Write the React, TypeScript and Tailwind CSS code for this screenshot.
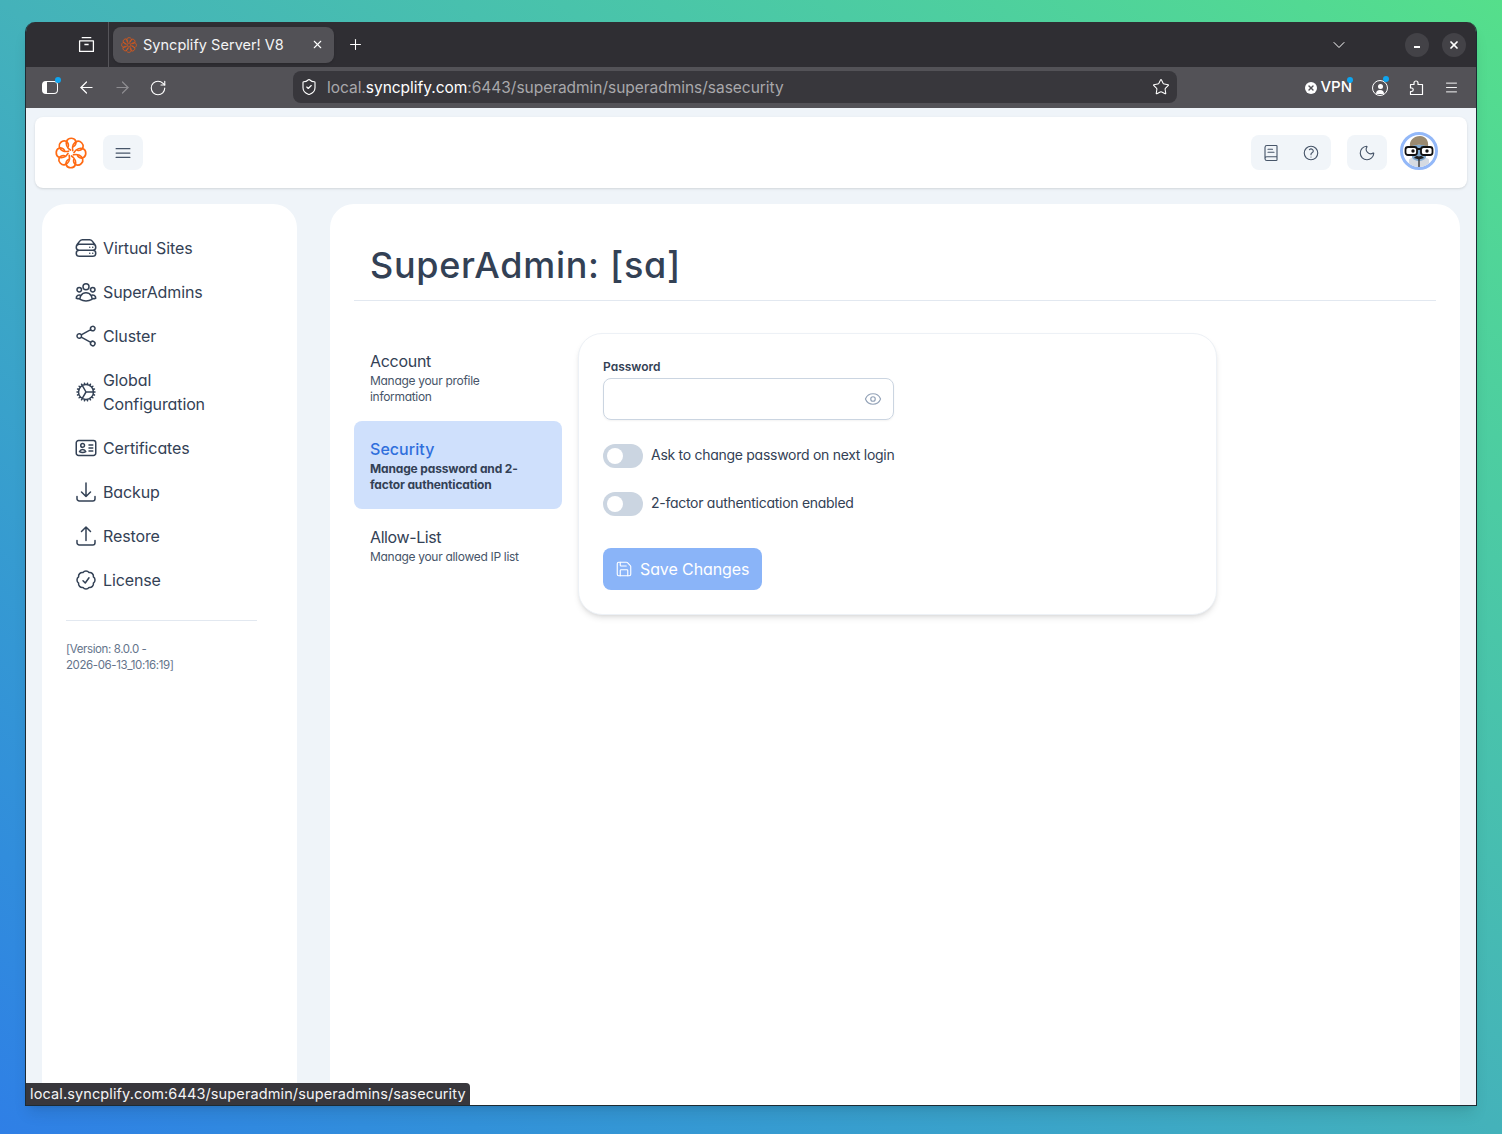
import { ArrowLeft, ArrowRight, BookText, ChevronDown, Eye, Menu, Moon, Plus, RotateCw, Save, ShieldCheck, Star, X } from "lucide-react";
import {
  HiOutlineArrowDownTray,
  HiOutlineArrowUpTray,
  HiOutlineBars3,
  HiOutlineCheckBadge,
  HiOutlineCog,
  HiOutlineIdentification,
  HiOutlineQuestionMarkCircle,
  HiOutlineServerStack,
  HiOutlineShare,
  HiOutlineUserGroup,
} from "react-icons/hi2";

const navItems = [
  { label: "Virtual Sites", icon: HiOutlineServerStack },
  { label: "SuperAdmins", icon: HiOutlineUserGroup },
  { label: "Cluster", icon: HiOutlineShare },
  { label: "Global Configuration", icon: HiOutlineCog },
  { label: "Certificates", icon: HiOutlineIdentification },
  { label: "Backup", icon: HiOutlineArrowDownTray },
  { label: "Restore", icon: HiOutlineArrowUpTray },
  { label: "License", icon: HiOutlineCheckBadge },
];

function Flower({ className, stroke }: { className: string; stroke: string }) {
  return (
    <svg viewBox="0 0 32 32" fill="none" className={className}>
      {[0, 45, 90, 135, 180, 225, 270, 315].map((angle) => (
        <path
          key={angle}
          d="M15.5 13C11.5 10.5 10.5 6.5 12 3.5C13.5 0.5 19 0.5 20.5 3.5C21.8 6 20.5 8.5 18.5 9.5"
          stroke={stroke}
          strokeWidth="1.7"
          strokeLinecap="round"
          transform={`rotate(${angle} 16 16)`}
        />
      ))}
    </svg>
  );
}

function Avatar() {
  return (
    <div className="mb-[3px] size-[38px] overflow-hidden rounded-full border-[3px] border-[#93b8f8] bg-white">
      <svg viewBox="0 0 32 32" className="size-full">
        <path d="M6 32V25C6 23 11 22 16 22C21 22 26 23 26 25V32Z" fill="#d5dae2" />
        <path d="M9 10H23V22C23 24 19 26 16 26C13 26 9 24 9 22Z" fill="#7fa9cf" />
        <path d="M7 12C6 5 11 1 17 1C23 1 26 6 25 12C20 9 12 9 7 12Z" fill="#9a8a70" />
        <path d="M15.3 22H16.7V32H15.3Z" fill="#333" />
        <path d="M11 23C13 20.5 15 21 16 21.6C17 21 19 20.5 21 23L16 24.5Z" fill="#222" />
        <rect x="2.5" y="12" width="11.5" height="8" rx="2.5" fill="#fff" stroke="#111" strokeWidth="1.8" />
        <rect x="18" y="12" width="11.5" height="8" rx="2.5" fill="#fff" stroke="#111" strokeWidth="1.8" />
        <path d="M14 14H18" stroke="#111" strokeWidth="1.8" />
        <circle cx="10" cy="16" r="1.7" fill="#111" />
        <circle cx="24" cy="16" r="1.7" fill="#111" />
      </svg>
    </div>
  );
}

function Dot({ className }: { className: string }) {
  return <span className={`absolute size-[6px] rounded-full bg-[#0ea5f0] ${className}`} />;
}

function Toggle({ label }: { label: string }) {
  return (
    <div className="flex h-6 items-center gap-2">
      <div className="flex h-6 w-10 items-center rounded-full bg-[#cbd5e1] px-1">
        <div className="size-4 rounded-full bg-white" />
      </div>
      <span className="-mt-1 text-[14px] tracking-[-0.28px] text-[#334155]">{label}</span>
    </div>
  );
}

function BrowserBar() {
  return (
    <>
      <div className="flex h-[45px] items-center bg-[#2f2e33] text-white">
        <div className="flex h-full w-[83px] items-center justify-end border-r border-[#56555a] pr-[13px]">
          <svg viewBox="0 0 16 16" fill="none" stroke="currentColor" strokeWidth="1.2" className="size-[17px]">
            <path d="M3.5 1.5H12.5M1.5 4.5H14.5V14.5H1.5ZM6 8H10" strokeLinejoin="round" />
          </svg>
        </div>
        <div className="ml-1 flex h-9 w-[221px] items-center rounded-lg bg-[#525156] pl-2 pr-[10px] shadow-sm">
          <Flower className="size-4" stroke="#d9591c" />
          <span className="ml-[6px] flex-1 text-[14.5px] tracking-[0.03px] text-[#f4f4f5]">Syncplify Server! V8</span>
          <X className="size-[13px]" strokeWidth={2} />
        </div>
        <Plus className="ml-[13px] size-[17px]" strokeWidth={1.5} />
        <ChevronDown className="ml-auto mr-[56px] size-5" strokeWidth={1.2} />
        <div className="mr-[13px] flex size-6 items-center justify-center rounded-full bg-[#434247]">
          <div className="mt-[5px] h-[2px] w-[6px] bg-white" />
        </div>
        <div className="mr-[10px] flex size-6 items-center justify-center rounded-full bg-[#434247]">
          <X className="size-3" strokeWidth={3.5} />
        </div>
      </div>
      <div className="flex h-[41px] items-center bg-[#535257] text-white">
        <div className="relative ml-4 mr-[19px] h-[13px] w-4 rounded-sm border-[1.5px] border-l-[5px] border-white">
          <Dot className="-right-[4px] -top-[5px]" />
        </div>
        <ArrowLeft className="size-[19px]" strokeWidth={1.5} />
        <ArrowRight className="ml-[17px] size-[19px] text-[#8e8d91]" strokeWidth={1.5} />
        <RotateCw className="ml-[17px] size-[18px]" strokeWidth={1.5} />
        <div className="mb-px ml-[126px] flex h-8 w-[884px] shrink-0 items-center rounded-lg bg-[#38373c] pl-[7px] pr-[7px] text-[15.5px] tracking-[-0.03px]">
          <ShieldCheck className="size-[18px]" strokeWidth={1.5} />
          <span className="ml-[9px] mt-[2px] flex-1 text-[#a8a8ab]">
            local.<span className="text-white">syncplify.com</span>:6443/superadmin/superadmins/sasecurity
          </span>
          <Star className="size-[18px]" strokeWidth={1.4} />
        </div>
        <div className="ml-auto flex items-center">
          <div className="flex size-3 items-center justify-center rounded-full bg-white text-[#535257]">
            <X className="size-2" strokeWidth={4} />
          </div>
          <span className="relative ml-[3px] text-[15px] font-medium">
            VPN
            <Dot className="-right-[1px] top-[1px]" />
          </span>
          <div className="relative ml-[20px] flex size-4 items-center justify-center overflow-hidden rounded-full border-[1.5px] border-white">
            <div className="mt-[2px] flex flex-col items-center">
              <div className="size-[5px] rounded-full bg-white" />
              <div className="mt-px h-1 w-2 rounded-t-full bg-white" />
            </div>
          </div>
          <div className="relative size-0">
            <Dot className="-left-[5px] -top-[12px]" />
          </div>
          <svg viewBox="0 0 16 16" fill="none" stroke="currentColor" strokeWidth="1.2" strokeLinejoin="round" className="ml-[20px] size-4">
            <path d="M6 4.5V3A2 2 0 0 1 10 3V4.5H14.5V14.5H2.5V11.5H3.5A1.75 1.75 0 0 0 3.5 8H2.5V4.5Z" />
          </svg>
          <Menu className="ml-[20px] mr-[17px] size-[15px]" strokeWidth={1.5} />
        </div>
      </div>
    </>
  );
}

export default function App() {
  return (
    <div className="h-[1134px] overflow-hidden bg-gradient-to-bl from-[#55df8b] via-[#44b2ba] to-[#2f7fe6] px-[25px] pt-[22px] font-['Inter',sans-serif]">
      <div className="relative flex h-[1084px] flex-col overflow-hidden rounded-t-[10px] border border-t-0 border-[#1d2b33] shadow-lg">
        <BrowserBar />

        <div className="flex min-h-0 flex-1 flex-col bg-[#eff4f9] text-[#334155] [font-feature-settings:'cv11']">
          <header className="mx-[9px] mt-[9px] flex h-[71px] shrink-0 items-center rounded-lg bg-white pl-5 pr-[29px] shadow-sm">
            <Flower className="size-8" stroke="#ff6a13" />
            <button className="ml-4 flex h-[35px] w-10 items-center justify-center rounded-lg bg-[#f1f5f9] text-[#475569]">
              <HiOutlineBars3 className="size-5" />
            </button>
            <div className="ml-auto flex h-[35px] w-20 items-center justify-between rounded-lg bg-[#f1f5f9] px-[11px] text-[#475569]">
              <BookText className="size-[18px]" strokeWidth={1.5} />
              <HiOutlineQuestionMarkCircle className="size-[18px]" />
            </div>
            <div className="ml-4 flex h-[35px] w-10 items-center justify-center rounded-lg bg-[#f1f5f9] text-[#475569]">
              <Moon className="size-[18px]" strokeWidth={1.5} />
            </div>
            <div className="ml-[13px]">
              <Avatar />
            </div>
          </header>

          <div className="flex min-h-0 flex-1 pl-4 pr-4 pt-4">
            <aside className="h-[1000px] w-[255px] shrink-0 rounded-t-3xl bg-white pl-6 pr-10 pt-[22px]">
              <nav className="flex flex-col">
                {navItems.map(({ label, icon: Icon }) => (
                  <a key={label} className="flex items-center gap-[5px] px-2 py-[10px] text-[16px] leading-6 tracking-[-0.12px]">
                    <Icon className="size-6 shrink-0" />
                    <span className={label === "Global Configuration" ? "w-[110px]" : ""}>{label}</span>
                  </a>
                ))}
              </nav>
              <div className="mt-[18px] border-t border-[#e2e8f0] pt-5 text-[11.5px] leading-4 tracking-[-0.4px] text-[#64748b]">
                [Version: 8.0.0 -
                <br />
                2026-06-13_10:16:19]
              </div>
            </aside>

            <main className="ml-[33px] h-[1000px] min-w-0 flex-1 rounded-t-3xl bg-white px-6">
              <h1 className="flex h-[97px] items-center border-b border-[#e2e8f0] pl-4 pt-[26px] text-[36px] font-[550] leading-10 tracking-[0.7px] text-[#334155]">
                SuperAdmin: [sa]
              </h1>
              <div className="mt-8 flex items-start gap-4">
                <div className="flex w-[208px] shrink-0 flex-col">
                  <div className="py-4 pl-4 pr-8">
                    <div className="text-[16px] leading-[24px] tracking-[-0.3px]">Account</div>
                    <div className="text-[12px] leading-4 tracking-[-0.3px] text-[#475569]">Manage your profile information</div>
                  </div>
                  <div className="rounded-lg bg-[#cfe0fc] py-4 pl-4 pr-8">
                    <div className="text-[16px] font-medium leading-[24px] tracking-[0.05px] text-[#2f6fdc]">Security</div>
                    <div className="text-[12px] font-bold leading-4 tracking-[-0.15px] text-[#334155]">
                      Manage password and 2-factor authentication
                    </div>
                  </div>
                  <div className="py-4 pl-4 pr-8">
                    <div className="text-[16px] leading-[24px] tracking-[-0.4px]">Allow-List</div>
                    <div className="text-[12px] leading-4 tracking-[-0.3px] text-[#475569]">Manage your allowed IP list</div>
                  </div>
                </div>

                <section className="h-[282px] w-[639px] rounded-3xl border border-[#edf1f6] bg-white px-6 pt-[25px] shadow-md">
                  <label className="block text-[12px] font-semibold leading-4 text-[#334155]">Password</label>
                  <div className="mt-[3px] flex h-[42px] w-[291px] items-center justify-end rounded-lg border border-[#cbd5e1] pr-[11px] shadow-xs">
                    <Eye className="size-[18px] text-[#94a3b8]" strokeWidth={1.6} />
                  </div>
                  <div className="mt-6 flex flex-col gap-6">
                    <Toggle label="Ask to change password on next login" />
                    <Toggle label="2-factor authentication enabled" />
                  </div>
                  <button className="mt-8 flex h-[42px] w-[159px] items-center gap-[7px] rounded-lg bg-[#8ab4f8] pl-[12px] text-[16px] tracking-[-0.1px] text-white">
                    <Save className="size-[18px]" strokeWidth={1.5} />
                    Save Changes
                  </button>
                </section>
              </div>
            </main>
          </div>
        </div>

        <div className="absolute bottom-0 left-0 rounded-tr-[4px] bg-[#38373c] px-1 pb-[2px] pt-px text-[14.5px] leading-[19px] tracking-[0.12px] text-[#f4f4f5]">
          local.syncplify.com:6443/superadmin/superadmins/sasecurity
        </div>
      </div>
    </div>
  );
}
